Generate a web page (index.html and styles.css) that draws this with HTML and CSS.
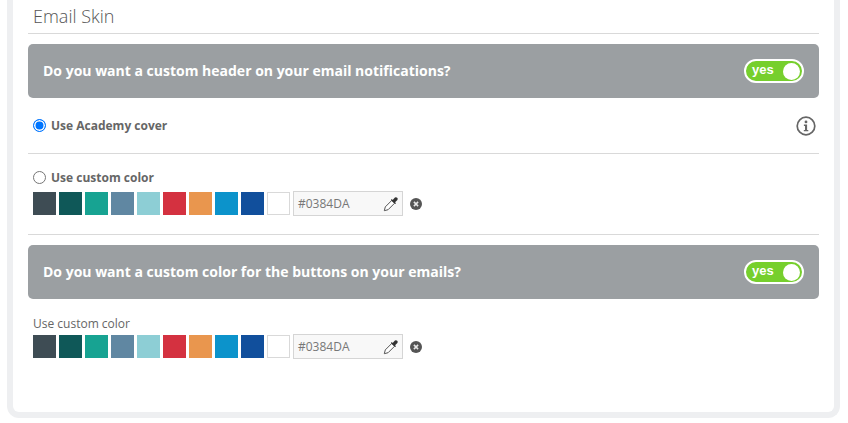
FILE: index.html
```html
<!DOCTYPE html>
<html lang="en">
<head>
<meta charset="UTF-8">
<meta name="viewport" content="width=device-width, initial-scale=1.0">
<title>Email Skin</title>
<link rel="stylesheet" href="styles.css">
</head>
<body>
<div class="panel">
  <h2 class="panel-title">Email Skin</h2>

  <div class="option-bar">
    <span class="bar-text">Do you want a custom header on your email notifications?</span>
    <div class="toggle"><b>yes</b><i></i></div>
  </div>

  <div class="cover-row">
    <label class="radio-label"><span class="radio checked"></span>Use Academy cover</label>
    <svg class="info-icon" width="20" height="20" viewBox="0 0 20 20">
      <circle cx="10" cy="10" r="8.8" fill="none" stroke="#666" stroke-width="1.7"/>
      <circle cx="10" cy="5.9" r="1.4" fill="#666"/>
      <path d="M7.900 8.500h3.200v5.400h1.200v1.400H7.800v-1.400h1.200v-4H7.900z" fill="#666"/>
    </svg>
  </div>

  <div class="custom-row">
    <label class="radio-label"><span class="radio"></span>Use custom color</label>
    <div class="color-picker">
      <span class="swatch c1"></span>
      <span class="swatch c2"></span>
      <span class="swatch c3"></span>
      <span class="swatch c4"></span>
      <span class="swatch c5"></span>
      <span class="swatch c6"></span>
      <span class="swatch c7"></span>
      <span class="swatch c8"></span>
      <span class="swatch c9"></span>
      <span class="swatch blank"></span>
      <div class="hex-input">
        <span>#0384DA</span>
        <svg width="16" height="16" viewBox="0 0 16 16">
          <path d="M8.800 4.400 2.300 10.900 1.300 14.700 5.100 13.700 11.600 7.200z" fill="#fff" stroke="#555" stroke-width="1"/>
          <path d="M7.900 3.900 12.100 8.100 13 7.200 12.100 6.300 14.400 4a1.800 1.800 0 0 0-2.500-2.500L9.700 3.900 8.800 3z" fill="#333"/>
        </svg>
      </div>
      <svg class="clear-icon" width="12" height="12" viewBox="0 0 12 12">
        <circle cx="6" cy="6" r="6" fill="#555"/>
        <path d="M3.900 3.900 8.100 8.100M8.100 3.900 3.900 8.100" stroke="#e8e8e8" stroke-width="1.500"/>
      </svg>
    </div>
  </div>

  <div class="option-bar">
    <span class="bar-text">Do you want a custom color for the buttons on your emails?</span>
    <div class="toggle"><b>yes</b><i></i></div>
  </div>

  <div class="button-row">
    <div class="plain-label">Use custom color</div>
    <div class="color-picker">
      <span class="swatch c1"></span>
      <span class="swatch c2"></span>
      <span class="swatch c3"></span>
      <span class="swatch c4"></span>
      <span class="swatch c5"></span>
      <span class="swatch c6"></span>
      <span class="swatch c7"></span>
      <span class="swatch c8"></span>
      <span class="swatch c9"></span>
      <span class="swatch blank"></span>
      <div class="hex-input">
        <span>#0384DA</span>
        <svg width="16" height="16" viewBox="0 0 16 16">
          <path d="M8.800 4.400 2.300 10.900 1.300 14.700 5.100 13.700 11.600 7.200z" fill="#fff" stroke="#555" stroke-width="1"/>
          <path d="M7.900 3.900 12.100 8.100 13 7.200 12.100 6.300 14.400 4a1.800 1.800 0 0 0-2.500-2.500L9.700 3.900 8.800 3z" fill="#333"/>
        </svg>
      </div>
      <svg class="clear-icon" width="12" height="12" viewBox="0 0 12 12">
        <circle cx="6" cy="6" r="6" fill="#555"/>
        <path d="M3.900 3.900 8.100 8.100M8.100 3.900 3.900 8.100" stroke="#e8e8e8" stroke-width="1.500"/>
      </svg>
    </div>
  </div>
</div>
</body>
</html>
```

FILE: styles.css
```css
html, body {
  height: 423px;
  overflow: hidden;
}
body {
  margin: 0;
  font-family: "Open Sans", sans-serif;
  background-color: #fff;
  color: #555;
}
.panel {
  box-sizing: border-box;
  width: 833px;
  height: 418px;
  margin-left: 7px;
  padding: 0 15px;
  border: 6px solid #eeeff1;
  border-top: none;
  border-radius: 0 0 12px 12px;
}
.panel-title {
  box-sizing: border-box;
  height: 34px;
  margin: 0 0 10px;
  padding: 4px 0 0 5px;
  font-size: 18px;
  line-height: 24px;
  font-weight: 300;
  color: #555;
  border-bottom: 1px solid #d9d9d9;
}
.option-bar {
  display: flex;
  align-items: center;
  justify-content: space-between;
  height: 54px;
  padding: 0 15px;
  background-color: #9b9fa2;
  border-radius: 5px;
  color: #fff;
  font-size: 14px;
  font-weight: 700;
}
.bar-text {
  margin-bottom: 2px;
}
.toggle {
  box-sizing: border-box;
  display: flex;
  align-items: center;
  justify-content: space-between;
  width: 60px;
  height: 24px;
  padding: 0 2px 0 6px;
  background-color: #76cf2d;
  border: 2px solid #fff;
  border-radius: 12px;
}
.toggle b {
  font-family: "Liberation Sans", sans-serif;
  font-size: 13px;
  line-height: 16px;
  margin-top: -2px;
}
.toggle i {
  width: 17px;
  height: 17px;
  background-color: #fff;
  border-radius: 50%;
}
.cover-row {
  box-sizing: border-box;
  display: flex;
  align-items: center;
  justify-content: space-between;
  height: 56px;
  padding: 0 3px 0 5px;
  border-bottom: 1px solid #d9d9d9;
}
.radio-label {
  display: flex;
  align-items: center;
  gap: 5px;
  font-size: 12px;
  font-weight: 700;
  color: #666;
}
.radio {
  box-sizing: border-box;
  width: 13px;
  height: 13px;
  background-color: #fff;
  border: 1px solid #767676;
  border-radius: 50%;
}
.radio.checked {
  background-color: #0075ff;
  border: 1px solid #0075ff;
  box-shadow: inset 0 0 0 1.5px #fff;
}
.custom-row {
  box-sizing: border-box;
  height: 81px;
  margin-bottom: 10px;
  padding: 15px 0 0 5px;
  border-bottom: 1px solid #d9d9d9;
}
.color-picker {
  display: flex;
  align-items: center;
  height: 25px;
  margin-top: 5px;
}
.swatch {
  box-sizing: border-box;
  width: 23px;
  height: 23px;
  margin-right: 3px;
}
.c1 { background-color: #3e4c54; }
.c2 { background-color: #0f5858; }
.c3 { background-color: #17a392; }
.c4 { background-color: #6087a2; }
.c5 { background-color: #8dced5; }
.c6 { background-color: #d43140; }
.c7 { background-color: #e9964e; }
.c8 { background-color: #0c93cb; }
.c9 { background-color: #114f9c; }
.blank {
  background-color: #fff;
  border: 1px solid #d9d9d9;
}
.hex-input {
  box-sizing: border-box;
  display: flex;
  align-items: center;
  justify-content: space-between;
  width: 110px;
  height: 25px;
  padding: 0 3px 0 4px;
  background-color: #f8f8f8;
  border: 1px solid #d5d5d5;
  font-size: 12px;
  color: #777;
}
.clear-icon {
  margin-left: 7px;
}
.button-row {
  padding: 17px 0 0 5px;
}
.plain-label {
  font-size: 12px;
  line-height: 16px;
  color: #666;
}
.button-row .color-picker {
  margin-top: 2px;
}
```
